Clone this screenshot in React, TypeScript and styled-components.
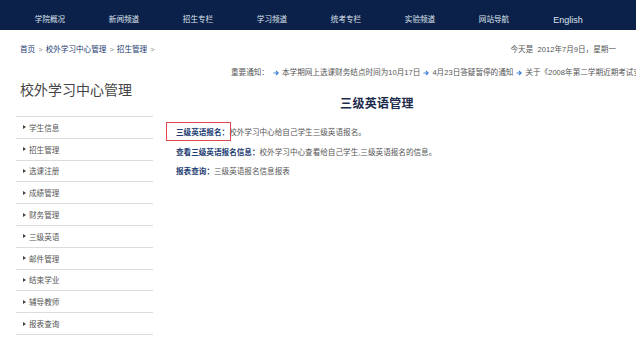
import * as React from 'react';
import styled, { createGlobalStyle } from 'styled-components';

const GlobalStyle = createGlobalStyle`
  html, body {
    margin: 0;
    padding: 0;
    background: #ffffff;
  }
  body {
    font-family: "Liberation Sans", "Noto Sans CJK SC", sans-serif;
    color: #555555;
  }
`;

const navItems = ['学院概况', '新闻频道', '招生专栏', '学习频道', '统考专栏', '实验频道', '网站导航', 'English'];

const menuItems = ['学生信息', '招生管理', '选课注册', '成绩管理', '财务管理', '三级英语', '邮件管理', '结束学业', '辅导教师', '报表查询'];

const notices = ['本学期网上选课财务结点时间为10月17日', '4月23日答疑暂停的通知', '关于《2008年第二学期近期考试安排》的通知'];

const Page = styled.div`
  width: 636px;
  height: 347px;
  overflow: hidden;
`;

const NavBar = styled.nav`
  display: flex;
  height: 30px;
  padding: 0 0 0 13px;
  background: #0c2149;
  box-sizing: border-box;
`;

const NavItem = styled.a<{ $latin?: boolean }>`
  width: 74px;
  padding-top: 14px;
  text-align: center;
  font-size: ${({ $latin }) => ($latin ? '9px' : '7.6px')};
  line-height: 12px;
  color: #dde3ee;
  text-decoration: none;
  white-space: nowrap;
`;

const TopRow = styled.div`
  display: flex;
  justify-content: space-between;
  align-items: center;
  padding: 14px 20px 0 20px;
  font-size: 7.6px;
  line-height: 12px;
`;

const Crumbs = styled.div`
  display: flex;
  gap: 3px;
  color: #888888;
`;

const Crumb = styled.a`
  color: #1d3c72;
  text-decoration: none;
`;

const DateText = styled.div`
  color: #555555;
`;

const NoticeRow = styled.div`
  display: flex;
  align-items: center;
  gap: 3px;
  padding: 11px 0 0 231px;
  font-size: 7.6px;
  line-height: 12px;
  white-space: nowrap;
  overflow: hidden;
  color: #555555;

  > * {
    flex-shrink: 0;
  }
`;

const NoticeLabel = styled.span`
  margin-right: 1px;
`;

const NoticeLink = styled.a`
  color: #555555;
  text-decoration: none;
`;

const Body = styled.div`
  display: grid;
  grid-template-columns: 153px 1fr;
  padding-top: 1px;
`;

const Sidebar = styled.aside`
  padding-left: 16px;
`;

const SideTitle = styled.h2`
  margin: 0 0 16px 4px;
  font-size: 14px;
  line-height: 20px;
  font-weight: normal;
  color: #444444;
`;

const Menu = styled.ul`
  list-style: none;
  margin: 0;
  padding: 0;
  border-top: 1px solid #dcdcdc;
`;

const MenuItem = styled.li`
  display: flex;
  align-items: center;
  gap: 3px;
  height: 20.8px;
  padding-left: 7px;
  border-bottom: 1px solid #dcdcdc;
  font-size: 7.6px;
  color: #555555;
`;

const Caret = styled.span`
  width: 0;
  height: 0;
  border-left: 3px solid #444444;
  border-top: 2px solid transparent;
  border-bottom: 2px solid transparent;
`;

const Main = styled.main`
  padding: 0 58px 0 23px;
`;

const MainTitle = styled.h1`
  margin: 15px 0 12px;
  text-align: center;
  font-family: "Noto Sans CJK SC", sans-serif;
  font-size: 12px;
  line-height: 16px;
  font-weight: bold;
  color: #1b2a4a;
  letter-spacing: 0.3px;
`;

const Line = styled.p`
  margin: 0;
  font-size: 7.6px;
  line-height: 19.5px;
  color: #555555;
  white-space: nowrap;
`;

const Label = styled.span<{ $marked?: boolean }>`
  position: relative;
  display: inline-block;
  color: #1d3c72;
  font-weight: bold;

  &::after {
    content: '';
    display: ${({ $marked }) => ($marked ? 'block' : 'none')};
    position: absolute;
    left: -10px;
    right: -2px;
    top: -1px;
    bottom: 2px;
    border: 1px solid #e0474c;
  }
`;

const Arrow = () => (
  <svg width="6" height="6" viewBox="0 0 6 6">
    <path d="M0.5 3 H5 M3 1 L5.2 3 L3 5" stroke="#3f82d6" strokeWidth="1.1" fill="none" />
  </svg>
);

const entries = [
  { label: '三级英语报名', text: '校外学习中心给自己学生三级英语报名。', marked: true },
  { label: '查看三级英语报名信息', text: '校外学习中心查看给自己学生,三级英语报名的信息。' },
  { label: '报表查询', text: '三级英语报名信息报表' },
];

export default function App() {
  return (
    <Page>
      <GlobalStyle />
      <NavBar>
        {navItems.map((item) => (
          <NavItem key={item} $latin={item === 'English'}>{item}</NavItem>
        ))}
      </NavBar>
      <TopRow>
        <Crumbs>
          <Crumb>首页</Crumb>&gt;<Crumb>校外学习中心管理</Crumb>&gt;<Crumb>招生管理</Crumb>&gt;
        </Crumbs>
        <DateText>今天是&nbsp;&nbsp;2012年7月9日，星期一</DateText>
      </TopRow>
      <NoticeRow>
        <NoticeLabel>重要通知：</NoticeLabel>
        {notices.map((n) => (
          <React.Fragment key={n}>
            <Arrow />
            <NoticeLink>{n}</NoticeLink>
          </React.Fragment>
        ))}
      </NoticeRow>
      <Body>
        <Sidebar>
          <SideTitle>校外学习中心管理</SideTitle>
          <Menu>
            {menuItems.map((m) => (
              <MenuItem key={m}>
                <Caret />
                {m}
              </MenuItem>
            ))}
          </Menu>
        </Sidebar>
        <Main>
          <MainTitle>三级英语管理</MainTitle>
          {entries.map((e) => (
            <Line key={e.label}>
              <Label $marked={e.marked}>{e.label}：</Label>
              {e.text}
            </Line>
          ))}
        </Main>
      </Body>
    </Page>
  );
}
